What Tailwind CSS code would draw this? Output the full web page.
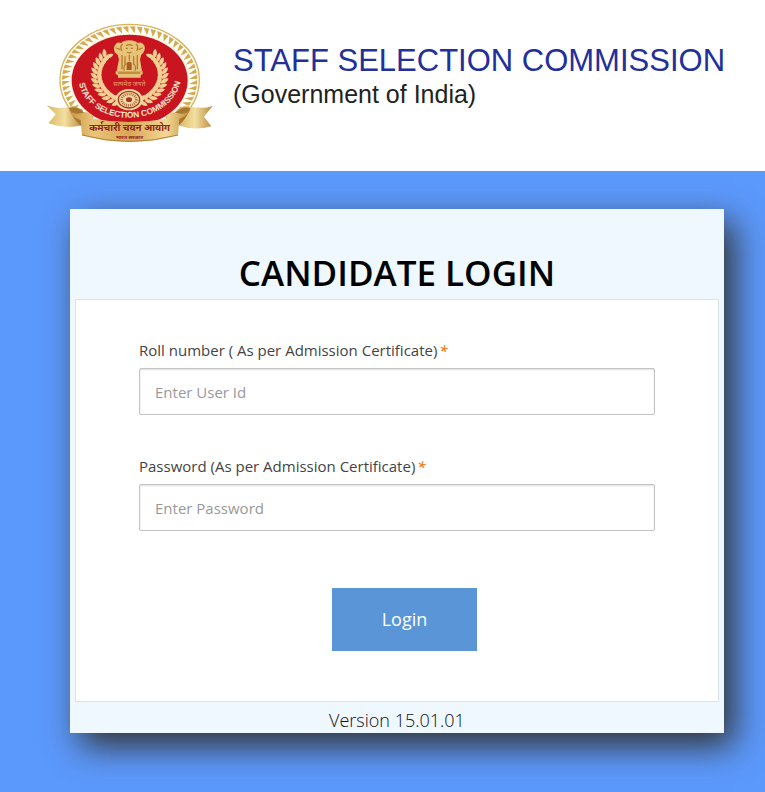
<!DOCTYPE html>
<html lang="en">
<head>
<meta charset="utf-8">
<meta name="viewport" content="width=device-width, initial-scale=1">
<title>Candidate Login</title>
<script src="https://cdn.jsdelivr.net/npm/@tailwindcss/browser@4"></script>
</head>
<body class="min-h-screen flex flex-col bg-[#5c99fc] font-['Open_Sans',sans-serif] text-[#333]">
<header class="bg-white pl-10 pt-[18px] pb-[23px] flex items-start gap-[13px]">
  <svg class="w-[180px] h-[130px] shrink-0" viewBox="0 0 540 390" role="img" aria-label="Staff Selection Commission emblem">
    <defs>
      <linearGradient id="band" x1="0" x2="1"><stop offset="0" stop-color="#c79443"/><stop offset=".2" stop-color="#e9c57a"/><stop offset=".5" stop-color="#d9a655"/><stop offset=".8" stop-color="#f2d894"/><stop offset="1" stop-color="#c08c3c"/></linearGradient>
      <linearGradient id="tail" x1="0" x2="1"><stop offset="0" stop-color="#d9b663"/><stop offset=".5" stop-color="#f3dfa0"/><stop offset="1" stop-color="#b98b3d"/></linearGradient>
      <path id="arc" d="M114 164 C112 345 422 345 425 160"/>
      <path id="leaf" d="M0 0 C5 -10 16 -14 26 -9 C20 2 9 6 0 0Z"/>
    </defs>
    <ellipse cx="269" cy="186" rx="209" ry="167" fill="#fffef8" stroke="#d8b25c" stroke-width="4"/>
    <g id="teeth" fill="#d3ac52"></g>
    <ellipse cx="269" cy="186" rx="180" ry="142" fill="#fff8e4"/>
    <ellipse cx="269" cy="187" rx="174" ry="137" fill="#c9151f"/>
    <g id="wreath" fill="#efcf92"></g>
    <g fill="#e7c277">
      <path d="M225 104 Q218 88 226 80 Q230 71 243 75 Q252 67 268 67 Q286 67 293 75 Q305 71 311 80 Q319 88 310 104 L304 110 L300 124 L306 160 L230 160 L237 124 L233 110Z"/>
      <path d="M227 160h81v8l-6 4v7h-68v-7l-7-4Z"/>
    </g>
    <g fill="none" stroke="#b57c35" stroke-width="4" stroke-linecap="round">
      <path d="M247 79q-8 8-2 18M289 79q8 8 2 18M260 82q8-4 16 0M259 91h3M274 91h3M263 103q5 4 10 0M229 90l10 4M307 90l-10 4M246 112v40M255 116v22M268 112v14M281 116v22M292 112v40M236 165h64M252 156q-2-14 6-18M286 156q2-14-6-18"/>
    </g>
    <path d="M260 156v-22q8-6 15 0v22Z" fill="#ab5c25"/>
    <text x="268" y="204" text-anchor="middle" font-family="Noto Sans, sans-serif" font-size="20" fill="#e99c6d">सत्यमेव जयते</text>
    <ellipse cx="267" cy="245" rx="41" ry="32" fill="#f1d8a1"/>
    <ellipse cx="267" cy="245" rx="32" ry="25" fill="none" stroke="#a53a25" stroke-width="4"/>
    <ellipse cx="267" cy="245" rx="22" ry="17" fill="none" stroke="#b8683e" stroke-width="8" stroke-dasharray="3 3"/>
    <ellipse cx="267" cy="245" rx="9" ry="7" fill="#a8322a"/>
    <text font-family="Liberation Sans, Arial, sans-serif" font-size="25" font-weight="700" fill="#fbe7cc"><textPath href="#arc" startOffset="50%" text-anchor="middle">STAFF SELECTION COMMISSION</textPath></text>
    <path d="M20 262 Q58 278 100 263 L128 275 L126 322 Q75 334 25 316 L47 289Z" fill="url(#tail)"/>
    <path d="M518 264 Q480 276 438 262 L412 274 L414 322 Q465 340 514 325 L492 296Z" fill="url(#tail)"/>
    <path d="M86 270 Q110 262 130 282 L160 296 L155 320 L126 326 Q100 306 86 270Z" fill="#a9782f"/>
    <path d="M452 270 Q428 262 408 282 L378 296 L383 320 L412 326 Q438 306 452 270Z" fill="#a9782f"/>
    <path d="M86 270 Q92 291 125 286 Q151 275 160 302 Q268 322 378 302 Q388 275 413 286 Q446 291 452 270 Q449 292 418 302 L414 352 Q268 392 126 352 L122 306 Q91 299 86 270Z" fill="url(#band)"/>
    <path d="M126 351 Q268 390 414 351" fill="none" stroke="#b18138" stroke-width="3"/>
    <text x="269" y="340" text-anchor="middle" font-family="Noto Sans, sans-serif" font-size="29" font-weight="700" fill="#8e261b">कर्मचारी चयन आयोग</text>
    <text x="268" y="364" text-anchor="middle" font-family="Noto Sans, sans-serif" font-size="16" font-weight="700" fill="#8e261b">भारत सरकार</text>
  </svg>
  <div class="pt-[26px] font-['Liberation_Sans',Arial,sans-serif] whitespace-nowrap">
    <p class="text-[31px] leading-[34px] text-[#23309a]">STAFF SELECTION COMMISSION</p>
    <p class="text-[25px] leading-[32px] text-[#222]">(Government of India)</p>
  </div>
</header>
<main class="pt-[38px] pb-[59px] pl-[70px] pr-[41px]">
  <section class="bg-[#eff7ff] px-[5px] pt-10 shadow-[10px_13px_32px_#333]">
    <h1 class="text-center text-[35px] leading-[48px] pb-0.5 font-semibold text-black">CANDIDATE LOGIN</h1>
    <form class="bg-white border border-[#dde2e6] px-[63px] pt-10 pb-[50px]" onsubmit="return false">
      <label for="uid" class="block text-[15px] leading-[20px] text-[#444]">Roll number ( As per Admission Certificate)<span class="text-[#f47920] italic font-semibold ml-0.5">*</span></label>
      <input id="uid" type="text" placeholder="Enter User Id" class="mt-2 block w-full h-[47px] rounded-xs border border-[#c4c4c4] px-[15px] text-[15px] shadow-[inset_0_1px_2px_#0002] placeholder:text-[#999]">
      <label for="pwd" class="mt-[41px] block text-[15px] leading-[20px] text-[#444]">Password (As per Admission Certificate)<span class="text-[#f47920] italic font-semibold ml-0.5">*</span></label>
      <input id="pwd" type="password" placeholder="Enter Password" class="mt-2 block w-full h-[47px] rounded-xs border border-[#c4c4c4] px-[15px] text-[15px] shadow-[inset_0_1px_2px_#0002] placeholder:text-[#999]">
      <div class="mt-[57px] pl-[15px] flex justify-center">
        <button type="submit" class="w-[145px] h-[63px] bg-[#5995d7] text-white text-[18px]">Login</button>
      </div>
    </form>
    <p class="text-center text-[18px] leading-[26px] pt-[5px] font-light text-[#111]">Version 15.01.01</p>
  </section>
</main>
<script>
const NS='http://www.w3.org/2000/svg';
const teeth=document.getElementById('teeth');
for(let i=0;i<60;i++){
  const p=(a,rx,ry)=>(269+rx*Math.cos(a)).toFixed(1)+','+(186+ry*Math.sin(a)).toFixed(1);
  const a=i*Math.PI/30, e=document.createElementNS(NS,'polygon');
  e.setAttribute('points',[p(a,203,161),p(a+.085,203,161),p(a+.085,178,140)].join(' '));
  teeth.append(e);
}
const wreath=document.getElementById('wreath');
for(let s=-1;s<=1;s+=2)for(let i=0;i<13;i++){
  const t=(72-i*9.3)*Math.PI/180, x=269+s*96*Math.cos(t), y=172+82*Math.sin(t);
  for(const r of [-5,-78]){
    const u=document.createElementNS(NS,'use');
    u.setAttribute('href','#leaf');
    u.setAttribute('transform',`translate(${x} ${y}) scale(${s} 1) rotate(${t*57.3-45+r+25})`);
    wreath.append(u);
  }
}
</script>
</body>
</html>
